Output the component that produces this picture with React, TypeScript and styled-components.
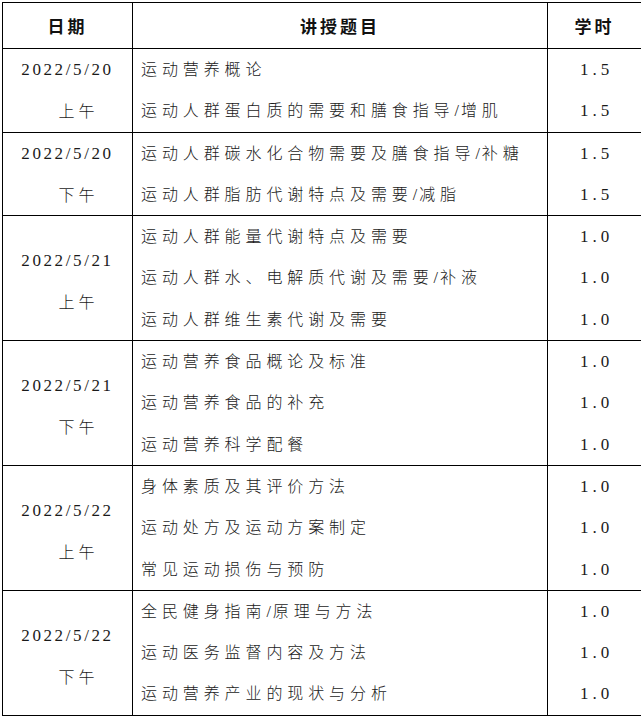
import styled, { createGlobalStyle } from 'styled-components';

const GlobalStyle = createGlobalStyle`
  html, body {
    margin: 0;
    padding: 0;
    background: #fff;
  }
  body {
    padding: 2px 0 0 2px;
    font-family: "Liberation Serif", "Noto Sans CJK SC", serif;
    color: #1a1a1a;
  }
`;

const Table = styled.table`
  border-collapse: collapse;
  table-layout: fixed;
  width: 636px;

  td, th {
    border: 1px solid #000;
    padding: 0;
  }
`;

const HeadCell = styled.th<{ $w: number }>`
  width: ${(p) => p.$w}px;
  height: 45px;
  font-family: "Noto Sans CJK SC", sans-serif;
  font-weight: 700;
  font-size: 17px;
  letter-spacing: 3px;
  text-align: center;
  vertical-align: middle;
  color: #111;
`;

const DateCell = styled.td<{ $lines: number }>`
  text-align: center;
  vertical-align: middle;
  padding-top: ${(p) => (p.$lines > 2 ? 6 : 0)}px !important;
`;

const DateLine = styled.div`
  height: 41.3px;
  line-height: 41.3px;
  font-family: "Liberation Serif", serif;
  font-size: 17px;
  letter-spacing: 2.6px;
`;

const PeriodLine = styled.div`
  height: 41.3px;
  line-height: 41.3px;
  padding-left: 22px;
  font-family: "Noto Sans CJK SC", sans-serif;
  font-weight: 300;
  font-size: 16px;
  letter-spacing: 4px;
`;

const TopicCell = styled.td`
  vertical-align: top;
  padding-left: 8px !important;
`;

const Topic = styled.div`
  height: 41.3px;
  line-height: 41.3px;
  font-family: "Liberation Serif", "Noto Sans CJK SC", sans-serif;
  font-weight: 300;
  font-size: 16px;
  letter-spacing: 4.9px;
  white-space: nowrap;
`;

const Slash = styled.span`
  letter-spacing: 2px;
`;

const HoursCell = styled.td`
  vertical-align: top;
  text-align: center;
`;

const Hours = styled.div`
  height: 41.3px;
  line-height: 41.3px;
  font-family: "Liberation Serif", serif;
  font-size: 17px;
  letter-spacing: 4px;
  padding-left: 4px;
`;

type Group = { date: string; period: string; items: [string, string][] };

const groups: Group[] = [
  {
    date: '2022/5/20',
    period: '上午',
    items: [
      ['运动营养概论', '1.5'],
      ['运动人群蛋白质的需要和膳食指导/增肌', '1.5'],
    ],
  },
  {
    date: '2022/5/20',
    period: '下午',
    items: [
      ['运动人群碳水化合物需要及膳食指导/补糖', '1.5'],
      ['运动人群脂肪代谢特点及需要/减脂', '1.5'],
    ],
  },
  {
    date: '2022/5/21',
    period: '上午',
    items: [
      ['运动人群能量代谢特点及需要', '1.0'],
      ['运动人群水、电解质代谢及需要/补液', '1.0'],
      ['运动人群维生素代谢及需要', '1.0'],
    ],
  },
  {
    date: '2022/5/21',
    period: '下午',
    items: [
      ['运动营养食品概论及标准', '1.0'],
      ['运动营养食品的补充', '1.0'],
      ['运动营养科学配餐', '1.0'],
    ],
  },
  {
    date: '2022/5/22',
    period: '上午',
    items: [
      ['身体素质及其评价方法', '1.0'],
      ['运动处方及运动方案制定', '1.0'],
      ['常见运动损伤与预防', '1.0'],
    ],
  },
  {
    date: '2022/5/22',
    period: '下午',
    items: [
      ['全民健身指南/原理与方法', '1.0'],
      ['运动医务监督内容及方法', '1.0'],
      ['运动营养产业的现状与分析', '1.0'],
    ],
  },
];

function TopicText({ text }: { text: string }) {
  const parts = text.split('/');
  return (
    <>
      {parts.map((p, i) => (
        <span key={i}>
          {i > 0 && <Slash>/</Slash>}
          {p}
        </span>
      ))}
    </>
  );
}

export default function App() {
  return (
    <>
      <GlobalStyle />
      <Table>
        <thead>
          <tr>
            <HeadCell $w={129}>日期</HeadCell>
            <HeadCell $w={414}>讲授题目</HeadCell>
            <HeadCell $w={93}>学时</HeadCell>
          </tr>
        </thead>
        <tbody>
          {groups.map((g, i) => (
            <tr key={i}>
              <DateCell $lines={g.items.length}>
                <DateLine>{g.date}</DateLine>
                <PeriodLine>{g.period}</PeriodLine>
              </DateCell>
              <TopicCell>
                {g.items.map(([t]) => (
                  <Topic key={t}>
                    <TopicText text={t} />
                  </Topic>
                ))}
              </TopicCell>
              <HoursCell>
                {g.items.map(([t, h]) => (
                  <Hours key={t}>{h}</Hours>
                ))}
              </HoursCell>
            </tr>
          ))}
        </tbody>
      </Table>
    </>
  );
}
